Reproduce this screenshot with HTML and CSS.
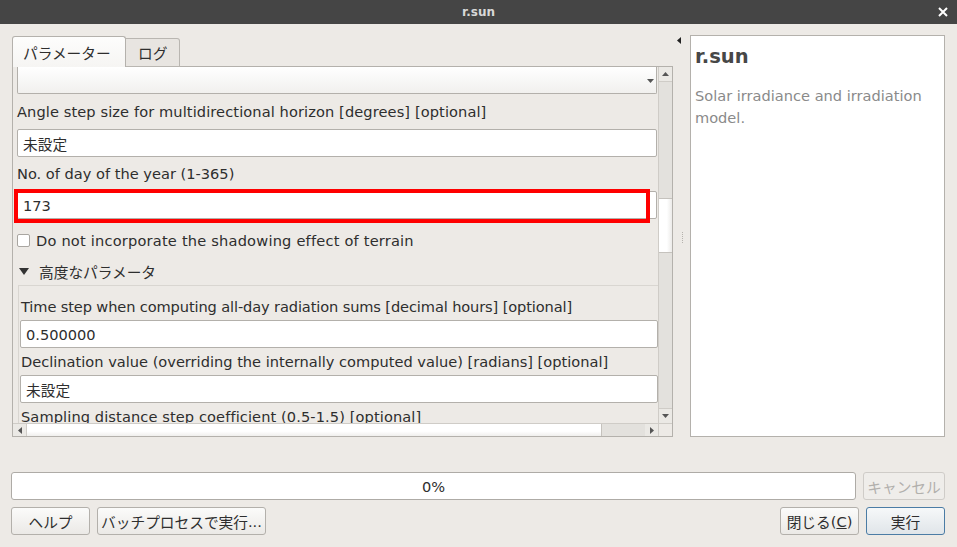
FILE: index.html
```html
<!DOCTYPE html>
<html lang="ja">
<head>
<meta charset="utf-8">
<title>r.sun</title>
<link rel="stylesheet" href="styles.css">
</head>
<body>
<div class="titlebar">
  <span></span>
  <span class="title">r.sun</span>
  <span class="close"><svg width="10" height="10" viewBox="0 0 10 10"><path d="M1 1L9 9M9 1L1 9" stroke="#ffffff" stroke-width="2"/></svg></span>
</div>
<div class="window">
  <div class="main">
    <div class="left">
      <div class="tabs">
        <div class="tab active"><span class="ja">パラメーター</span></div>
        <div class="tab"><span class="ja">ログ</span></div>
        <div class="tabfill"></div>
      </div>
      <div class="panel">
        <div class="viewport">
          <div class="content">
            <div class="combo"><svg class="carrow" width="7" height="4" viewBox="0 0 7 4"><path d="M0 0H7L3.5 4Z" fill="#555"/></svg></div>
            <div class="label wide">Angle step size for multidirectional horizon [degrees] [optional]</div>
            <div class="input"><span class="ja">未設定</span></div>
            <div class="label">No. of day of the year (1-365)</div>
            <div class="input marked">173<span class="redbox"></span></div>
            <div class="checkrow"><span class="checkbox"></span><span class="cblabel">Do not incorporate the shadowing effect of terrain</span></div>
            <div class="toggle"><svg width="10" height="7" viewBox="0 0 10 7"><path d="M0 0H10L5 7Z" fill="#333"/></svg><span class="ja">高度なパラメータ</span></div>
            <div class="group">
              <div class="glabel narrow">Time step when computing all-day radiation sums [decimal hours] [optional]</div>
              <div class="input">0.500000</div>
              <div class="glabel">Declination value (overriding the internally computed value) [radians] [optional]</div>
              <div class="input"><span class="ja">未設定</span></div>
              <div class="glabel wide">Sampling distance step coefficient (0.5-1.5) [optional]</div>
            </div>
          </div>
        </div>
        <div class="vbar">
          <div class="sbtn"><svg width="7" height="4" viewBox="0 0 7 4"><path d="M3.5 0L7 4H0Z" fill="#555"/></svg></div>
          <div class="vtrack"><div class="vthumb"></div></div>
          <div class="sbtn"><svg width="7" height="4" viewBox="0 0 7 4"><path d="M0 0H7L3.5 4Z" fill="#555"/></svg></div>
        </div>
        <div class="hbar">
          <div class="hbtn"><svg width="4" height="7" viewBox="0 0 4 7"><path d="M4 0V7L0 3.5Z" fill="#555"/></svg></div>
          <div class="hthumb"></div>
          <div class="htrack"></div>
          <div class="hbtn"><svg width="4" height="7" viewBox="0 0 4 7"><path d="M0 0V7L4 3.5Z" fill="#555"/></svg></div>
        </div>
        <div class="corner"></div>
      </div>
    </div>
    <div class="splitter">
      <svg class="collapse" width="4" height="7" viewBox="0 0 4 7"><path d="M4 0V7L0 3.5Z" fill="#222"/></svg>
      <span class="grip"></span>
    </div>
    <div class="desc">
      <h1>r.sun</h1>
      <p>Solar irradiance and irradiation model.</p>
    </div>
  </div>
  <div class="progressrow">
    <div class="progress">0%</div>
    <div class="btn disabled"><span class="ja">キャンセル</span></div>
  </div>
  <div class="buttonrow">
    <div class="btn help"><span class="ja">ヘルプ</span></div>
    <div class="btn batch"><span class="ja">バッチプロセスで実行</span>...</div>
    <div class="spacer"></div>
    <div class="btn"><span class="ja">閉じる</span>(<u>C</u>)</div>
    <div class="btn default"><span class="ja">実行</span></div>
  </div>
</div>
</body>
</html>
```
FILE: styles.css
```css
* { box-sizing: border-box; }
html, body { margin: 0; height: 100%; }
body {
  background: #edeae6;
  font-family: "DejaVu Sans", "Noto Sans CJK JP", sans-serif;
  font-size: 14.6px;
  color: #2e2e2e;
  overflow: hidden;
}
.ja { font-size: 14.7px; }

.titlebar {
  height: 24px;
  background: #454545;
  display: grid;
  grid-template-columns: 1fr auto 1fr;
  align-items: center;
}
.title { color: #d8d8d8; font-weight: bold; font-size: 12px; }
.close { justify-self: end; margin-right: 9px; display: flex; }

.window { padding: 11px 12px 0 11px; }
.main { display: flex; height: 402px; }
.left { width: 662px; padding-left: 1px; display: flex; flex-direction: column; }

.tabs { display: flex; align-items: flex-end; height: 32px; padding-top: 1px; }
.tab {
  height: 29px;
  padding: 0 12px;
  display: flex;
  align-items: center;
  background: #e8e5e1;
  border: 1px solid #b9b6b1;
  border-left: none;
  border-radius: 0 3px 0 0;
}
.tab.active {
  height: 31px;
  width: 114px;
  padding-left: 10px;
  background: linear-gradient(#fdfdfc, #f6f5f3);
  border: 1px solid #b4b1ac;
  border-bottom: none;
  border-radius: 3px 3px 0 0;
}
.tabfill { flex: 1; border-bottom: 1px solid #b4b1ac; height: 1px; }

.panel {
  flex: 1;
  border: 1px solid #b4b1ac;
  border-top: none;
  display: grid;
  grid-template-columns: 645px 14px;
  grid-template-rows: 356px 13px;
  background: #edeae6;
}
.viewport { overflow: hidden; }
.content { padding-left: 4px; display: flex; flex-direction: column; }

.combo {
  height: 27px;
  margin-right: 1px;
  background: linear-gradient(#ffffff, #f1f0ee);
  border: 1px solid #b3b0ab;
  border-top: none;
  border-radius: 0 0 2px 2px;
  display: flex;
  justify-content: flex-end;
  align-items: center;
  padding-right: 2px;
}
.carrow { margin-top: 1px; }

.label { height: 35px; line-height: 35px; white-space: nowrap; }
.label + .input + .label { height: 34px; line-height: 34px; }
.wide { letter-spacing: 0.1px; }
.narrow { letter-spacing: -0.12px; }

.input {
  height: 28px;
  margin-right: 1px;
  background: #fff;
  border: 1px solid #b3b0ab;
  border-radius: 2px;
  padding-left: 5px;
  display: flex;
  align-items: center;
  position: relative;
  white-space: nowrap;
}
.redbox {
  position: absolute;
  left: -4px;
  top: -3px;
  right: 6px;
  bottom: -5px;
  border: 4px solid #ff0000;
}

.checkrow { height: 43px; display: flex; align-items: center; gap: 6px; white-space: nowrap; }
.cblabel { letter-spacing: 0.2px; }
.checkbox {
  width: 13px; height: 13px;
  background: #fff;
  border: 1px solid #a9a6a1;
  border-radius: 2px;
}
.toggle { height: 18px; display: flex; align-items: center; gap: 10px; padding-left: 2px; margin-bottom: 5px; }

.group {
  margin-left: 1px;
  border-left: 1px solid #d9d6d1;
  border-top: 1px solid #d9d6d1;
  padding: 7px 0 0 1px;
  display: flex;
  flex-direction: column;
}
.group .input { margin-right: 0; }
.glabel { height: 27px; line-height: 27px; white-space: nowrap; padding-left: 1px; }

.vbar {
  background: #e3e1dd;
  border-left: 1px solid #cfccc7;
  display: flex;
  flex-direction: column;
}
.sbtn { height: 14px; display: flex; align-items: center; justify-content: center; background: #ebe9e5; }
.vtrack { flex: 1; border-top: 1px solid #cfccc7; border-bottom: 1px solid #cfccc7; }
.vthumb {
  margin-top: 116px;
  height: 55px;
  background: linear-gradient(90deg, #ffffff 60%, #ecebe9);
  border-top: 1px solid #c5c2bd;
  border-bottom: 1px solid #c5c2bd;
}
.hbar {
  display: flex;
  border-top: 1px solid #cfccc7;
  background: #e3e1dd;
}
.hbtn { width: 13px; display: flex; align-items: center; justify-content: center; background: #ebe9e5; }
.hthumb { width: 576px; background: linear-gradient(#ffffff 60%, #f0efed); border-left: 1px solid #d0cdc8; border-right: 1px solid #c5c2bd; }
.htrack { flex: 1; }
.corner { background: #edeae6; border-top: 1px solid #cfccc7; border-left: 1px solid #cfccc7; }

.splitter {
  width: 17px;
  display: flex;
  flex-direction: column;
  align-items: center;
  padding-top: 2px;
}
.collapse { margin-left: -5px; }
.grip {
  margin-top: 188px;
  width: 1px;
  height: 12px;
  margin-left: 2px;
  background: repeating-linear-gradient(#b5b2ad 0 1px, transparent 1px 2px);
}

.desc {
  width: 256px;
  background: #fff;
  border: 1px solid #b4b1ac;
  padding: 0 4px;
}
.desc h1 {
  margin: 8px 0 0 0;
  font-size: 19.5px;
  line-height: 26px;
  color: #474747;
}
.desc p {
  margin: 15px 0 0 0;
  font-size: 14.6px;
  line-height: 22px;
  color: #8a8a8a;
}

.progressrow { display: flex; gap: 7px; margin-top: 35px; }
.progress {
  flex: 1;
  height: 28px;
  background: #fff;
  border: 1px solid #aeaba6;
  border-radius: 3px;
  display: flex;
  align-items: center;
  justify-content: center;
}
.buttonrow { display: flex; gap: 7px; margin-top: 7px; }
.spacer { flex: 1; }
.btn {
  width: 79px;
  height: 28px;
  background: linear-gradient(#fbfbfa, #ebe9e6);
  border: 1px solid #b3b0ab;
  border-radius: 3px;
  display: flex;
  align-items: center;
  justify-content: center;
  white-space: nowrap;
}
.btn.batch { width: 169px; }
.btn.disabled { width: 82px; color: #b2b0ad; background: #efedea; border-color: #cfccc8; }
.btn.default { border-color: #4b7ca5; background: linear-gradient(#f6f8f9, #e0e5e9); }
.btn u { text-decoration: underline; }
```
